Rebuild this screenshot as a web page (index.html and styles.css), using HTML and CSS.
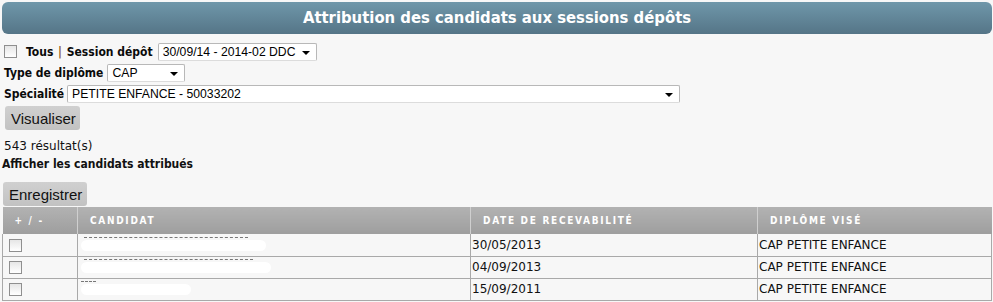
FILE: index.html
```html
<!DOCTYPE html>
<html lang="fr">
<head>
  <meta charset="UTF-8">
  <title>Attribution des candidats aux sessions dépôts</title>
  <link rel="stylesheet" href="styles.css">
</head>
<body>
  <div class="page">
    <h1 class="title-bar">Attribution des candidats aux sessions dépôts</h1>

    <div class="filters">
      <div class="filter-row">
        <span class="check"></span>
        <label class="lbl">Tous <span class="sep">|</span> Session dépôt</label>
        <div class="select sel-session">30/09/14 - 2014-02 DDC<span class="caret"></span></div>
      </div>
      <div class="filter-row">
        <label class="lbl">Type de diplôme</label>
        <div class="select sel-type">CAP<span class="caret"></span></div>
      </div>
      <div class="filter-row">
        <label class="lbl">Spécialité</label>
        <div class="select sel-spec">PETITE ENFANCE - 50033202<span class="caret"></span></div>
      </div>
      <button class="btn btn-visu">Visualiser</button>
    </div>

    <div class="count">543 résultat(s)</div>
    <div class="show-link">Afficher les candidats attribués</div>

    <button class="btn btn-save">Enregistrer</button>

    <table class="grid">
      <thead>
        <tr>
          <th class="c-sel">+ / -</th>
          <th class="c-cand">Candidat</th>
          <th class="c-date">Date de recevabilité</th>
          <th class="c-dip">Diplôme visé</th>
        </tr>
      </thead>
      <tbody>
        <tr>
          <td><span class="check"></span></td>
          <td><span class="masked m1"></span></td>
          <td>30/05/2013</td>
          <td>CAP PETITE ENFANCE</td>
        </tr>
        <tr>
          <td><span class="check"></span></td>
          <td><span class="masked m2"></span></td>
          <td>04/09/2013</td>
          <td>CAP PETITE ENFANCE</td>
        </tr>
        <tr>
          <td><span class="check"></span></td>
          <td><span class="masked m3"></span></td>
          <td>15/09/2011</td>
          <td>CAP PETITE ENFANCE</td>
        </tr>
      </tbody>
    </table>
  </div>
</body>
</html>
```

FILE: styles.css
```css
html, body {
  margin: 0;
  background-color: #f7f7f7;
  font-family: "DejaVu Sans", Verdana, sans-serif;
  font-size: 12px;
  color: #111;
}
.page {
  padding: 2px 1px 0 2px;
}
.title-bar {
  margin: 0;
  height: 32px;
  line-height: 32px;
  border-radius: 6px;
  background: linear-gradient(#6f97aa, #557587);
  color: white;
  text-align: center;
  font-family: "DejaVu Sans Condensed", "DejaVu Sans", sans-serif;
  font-size: 16.5px;
  font-weight: bold;
}
.filters {
  margin-top: 7px;
  padding-left: 2px;
}
.filter-row {
  display: flex;
  align-items: center;
  height: 21px;
  gap: 3px;
}
.lbl {
  font-family: "DejaVu Sans Condensed", "DejaVu Sans", sans-serif;
  font-weight: bold;
  font-size: 12px;
  color: #0a0a0a;
}
.sep {
  color: #8a5a1f;
  padding: 0 1px;
}
.check {
  display: inline-block;
  width: 11px;
  height: 11px;
  border: 1px solid #8f8f8f;
  background: linear-gradient(#e6e6e6, #ffffff);
}
.filter-row .check {
  margin: 0 6px 0 0;
}
.select {
  position: relative;
  height: 18px;
  line-height: 17px;
  box-sizing: border-box;
  border: 1px solid #b8b8b8;
  border-bottom-color: #dcdcdc;
  border-radius: 2px;
  background: white;
  font-family: "Liberation Sans", Arial, sans-serif;
  font-size: 12.2px;
  padding-left: 4px;
  color: #000;
}
.caret {
  position: absolute;
  right: 6px;
  top: 7px;
  border-left: 4px solid transparent;
  border-right: 4px solid transparent;
  border-top: 4px solid #000;
}
.sel-session { width: 159px; margin-left: 2px; }
.sel-type { width: 78px; margin-left: 1px; }
.sel-spec { width: 613px; }
.btn {
  display: block;
  border: none;
  border-radius: 3px;
  background: linear-gradient(#d0d0d0, #c2c2c2);
  font-family: "Liberation Sans", Arial, sans-serif;
  font-size: 15px;
  color: #111;
  height: 24px;
  padding: 0 6px;
}
.btn-visu {
  margin: 2px 0 0 1px;
  width: 75px;
}
.count {
  margin-top: 7px;
  padding-left: 2px;
  line-height: 18px;
}
.show-link {
  font-family: "DejaVu Sans Condensed", "DejaVu Sans", sans-serif;
  font-weight: bold;
  padding-left: 0;
  line-height: 18px;
}
.btn-save {
  margin-top: 9px;
  margin-left: 1px;
  width: 84px;
}
.grid {
  margin-top: 1px;
  width: 990px;
  border-collapse: collapse;
  table-layout: fixed;
}
.grid th {
  height: 27px;
  box-sizing: border-box;
  background: linear-gradient(#b2b2b2, #9e9e9e);
  color: white;
  font-family: "DejaVu Sans Condensed", "DejaVu Sans", sans-serif;
  font-size: 10px;
  font-weight: bold;
  text-transform: uppercase;
  letter-spacing: 1.7px;
  text-align: left;
  padding: 0 0 0 12px;
  border-left: 1px solid #cfcfcf;
}
.grid th:first-child { border-left: none; }
.grid th.c-sel { width: 75px; }
.grid th.c-cand { width: 393px; }
.grid th.c-date { width: 287px; }
.grid td {
  height: 22px;
  box-sizing: border-box;
  padding: 0 0 0 1px;
  border: 1px solid #a9a9a9;
  border-top: none;
  white-space: nowrap;
  overflow: hidden;
}
.grid td .check {
  margin-left: 5px;
  vertical-align: middle;
}
.masked {
  position: relative;
  display: inline-block;
  margin-left: 2px;
  height: 11px;
  background: white;
  border-radius: 6px;
  vertical-align: middle;
}
.masked::before {
  content: "";
  position: absolute;
  left: 3px;
  right: 18px;
  top: -3px;
  border-top: 1px dashed #777;
}
.m1 { width: 185px; }
.m2 { width: 190px; }
.m3 { width: 110px; }
.m3::before { left: 0; right: 95px; }
```
